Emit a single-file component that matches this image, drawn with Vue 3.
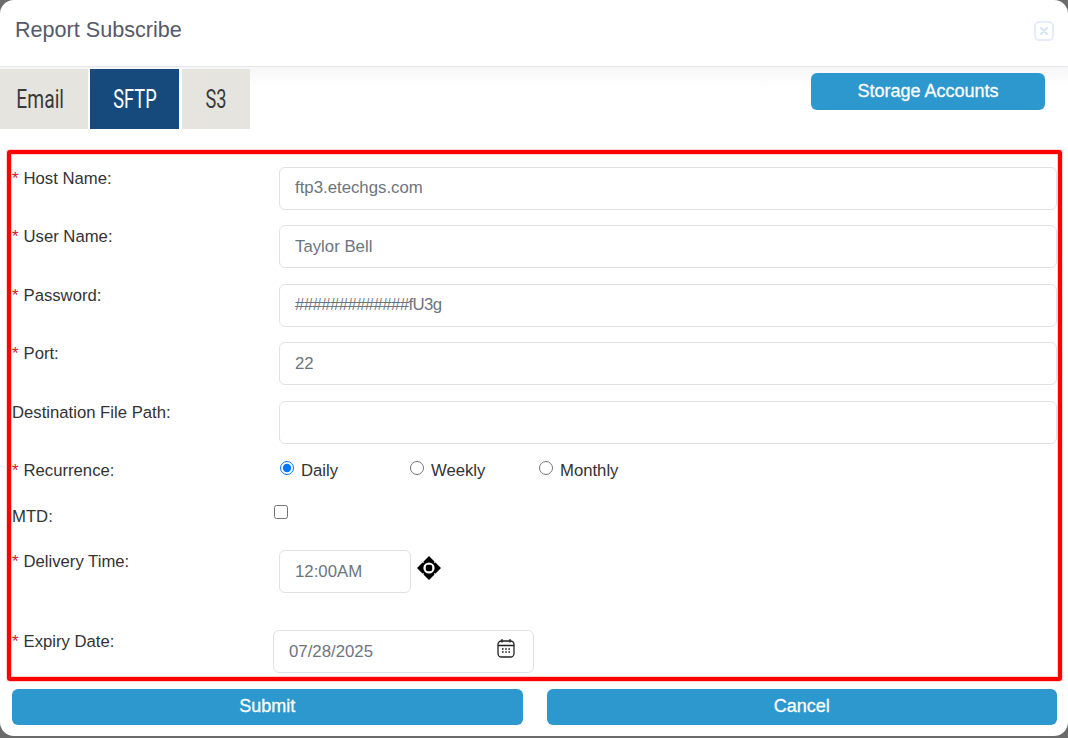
<script setup>
const rows = [
  { label: 'Host Name:', req: true, value: 'ftp3.etechgs.com' },
  { label: 'User Name:', req: true, value: 'Taylor Bell' },
  { label: 'Password:', req: true, value: '#############fU3g', tight: true },
  { label: 'Port:', req: true, value: '22' },
  { label: 'Destination File Path:', req: false, value: '' },
]
const tabs = ['Email', 'SFTP', 'S3']
const options = ['Daily', 'Weekly', 'Monthly']
</script>

<template>
  <div class="modal">
    <header class="head">
      <h1>Report Subscribe</h1>
      <span class="close" aria-label="Close">
        <svg width="20" height="20" viewBox="0 0 20 20">
          <rect x="1" y="1" width="18" height="18" rx="4" fill="none" stroke="#e3edfb" stroke-width="2"/>
          <path d="M7 7l6 6M13 7l-6 6" stroke="#d6e4f7" stroke-width="2" stroke-linecap="round"/>
        </svg>
      </span>
    </header>
    <div class="tabbar">
      <div class="tabs">
        <button v-for="t in tabs" :key="t" class="tab" :class="['tab-' + t, { active: t === 'SFTP' }]"><span>{{ t }}</span></button>
      </div>
      <button class="btn storage">Storage Accounts</button>
    </div>
    <form class="frame" @submit.prevent>
      <div v-for="r in rows" :key="r.label" class="row">
        <label class="lbl"><span v-if="r.req" class="req">*</span>{{ r.label }}</label>
        <input class="ctl" :class="{ tight: r.tight }" type="text" :value="r.value" />
      </div>
      <div class="row radios">
        <label class="lbl"><span class="req">*</span>Recurrence:</label>
        <div class="opts">
          <label v-for="(o, i) in options" :key="o" class="opt">
            <input type="radio" name="rec" :checked="i === 0" />
            <span>{{ o }}</span>
          </label>
        </div>
      </div>
      <div class="row mtd">
        <label class="lbl">MTD:</label>
        <input type="checkbox" class="chk" />
      </div>
      <div class="row time">
        <label class="lbl"><span class="req">*</span>Delivery Time:</label>
        <input class="ctl timebox" type="text" value="12:00AM" />
        <svg class="move" width="26" height="26" viewBox="0 0 26 26">
          <path d="M13 1l5.500 5.500-.5 1.500 1.500-.5L25 13l-5.500 5.500-1.500-.5.5 1.500L13 25l-5.500-5.500.5-1.500-1.500.5L1 13l5.500-5.500 1.500.5-.5-1.500z"/>
          <circle cx="13" cy="13" r="5.600" fill="#fff"/>
          <rect x="9.800" y="9.800" width="6.400" height="6.400" rx="2"/>
        </svg>
      </div>
      <div class="row date">
        <label class="lbl"><span class="req">*</span>Expiry Date:</label>
        <div class="datebox">
          <span>07/28/2025</span>
          <svg width="18" height="20" viewBox="0 0 18 20" fill="none" stroke="#222" stroke-width="1.300">
            <rect x="1" y="3" width="16" height="16" rx="3.500"/>
            <path d="M1 7.500h16M5 1v3.500M13 1v3.500"/>
            <path d="M5 11h1.600M8.200 11h1.600M11.400 11H13M5 14h1.600M8.200 14h1.600M11.400 14H13" stroke-width="1.500"/>
          </svg>
        </div>
      </div>
    </form>
    <div class="actions">
      <button class="btn">Submit</button>
      <button class="btn">Cancel</button>
    </div>
  </div>
</template>

<style>
html, body { margin: 0; background: #6b6b6b; height: 100%; overflow: hidden; }
</style>

<style scoped>
.modal {
  width: 1068px;
  height: 736px;
  background: #fff;
  border-radius: 14px;
  font-family: "Liberation Sans", Arial, sans-serif;
  overflow: hidden;
}
.head {
  border-bottom: 1px solid #e4e5ef;
  display: flex;
  align-items: center;
  justify-content: space-between;
  padding: 0 14px 6px 15px;
  height: 60px;
}
h1 { margin: 0; font-size: 21.600px; font-weight: 400; color: #565968; }
.close { display: flex; margin-top: 2px; }
.tabbar {
  height: 83px;
  display: flex;
  justify-content: space-between;
  align-items: flex-start;
  padding-right: 23px;
  background: linear-gradient(#f6f6f6, #fff 20px);
}
.tabs { display: flex; margin-top: 2px; }
.tab {
  height: 60px;
  border: 0;
  padding: 0;
  background: #e5e4df;
  color: #3a3a3a;
  font-family: "Roboto", sans-serif;
  font-size: 26px;
}
.tab span { display: inline-block; transform: scaleX(.7); }
.tab-Email { width: 88px; margin-right: 2px; padding-right: 8px; }
.tab-Email span { transform: scaleX(.74); }
.tab-SFTP { width: 89px; margin-right: 3px; }
.tab-S3 { width: 68px; }
.tab.active { background: #174a7c; color: #fff; }
.btn {
  border: 0;
  border-radius: 6px;
  background: #2c98ce;
  color: #fff;
  font-family: "Liberation Sans", Arial, sans-serif;
  font-size: 18px;
  font-weight: 400;
  -webkit-text-stroke: .3px #fff;
  height: 37px;
  padding: 0 0 1px;
}
.storage { width: 234px; margin-top: 6px; }
.frame {
  margin-left: 7px;
  width: 1055px;
  height: 531px;
  box-sizing: border-box;
  border: 4px solid #f00;
  border-radius: 3px;
  box-shadow: 0 0 0 1px rgba(255, 0, 0, .18), inset 0 0 0 1px rgba(255, 0, 0, .18);
  padding: 12.900px 1px 0 1px;
  display: block;
}
.row { display: flex; align-items: flex-start; margin-bottom: 15.500px; }
.lbl {
  width: 267px;
  flex: none;
  font-size: 16.700px;
  line-height: 24px;
  color: #333;
  margin-top: -.400px;
}
.req { color: #d2141e; margin-right: 5px; }
.ctl {
  flex: none;
  width: 778px;
  height: 43px;
  box-sizing: border-box;
  border: 1px solid #dee2e6;
  border-radius: 6px;
  padding: 0 15px;
  font: 16.800px "Liberation Sans", Arial, sans-serif;
  color: #6c757d;
  outline: none;
  background: #fff;
}
.tight { letter-spacing: -.6px; }
.radios { height: 24px; margin-top: 10px; margin-bottom: 0; }
.opts { display: flex; }
.opt { width: 129px; display: flex; align-items: flex-start; font-size: 16.700px; line-height: 24px; color: #333; }
.opt:first-child { width: 130px; }
.opt input { margin: 2px 7px 0 1px; width: 14px; height: 14px; }
.mtd { height: 24px; margin-top: 22px; margin-bottom: 0; }
.chk { width: 14px; height: 14px; margin: 0 0 0 -5px; }
.time { margin-top: 21px; height: 43px; margin-bottom: 0; }
.timebox { width: 132px; }
.move { margin: 5px 0 0 5px; }
.date { margin-top: 37px; margin-bottom: 0; }
.datebox {
  margin-left: -6px;
  width: 261px;
  height: 43px;
  box-sizing: border-box;
  border: 1px solid #dee2e6;
  border-radius: 6px;
  padding: 0 18px 8px 15px;
  display: flex;
  justify-content: space-between;
  align-items: center;
  font-size: 16.800px;
  color: #6c757d;
}
.datebox span { margin-top: 8px; }
.actions { display: flex; gap: 24px; padding: 8px 11px 0 12px; }
.actions .btn { flex: 1; height: 36px; }
</style>
